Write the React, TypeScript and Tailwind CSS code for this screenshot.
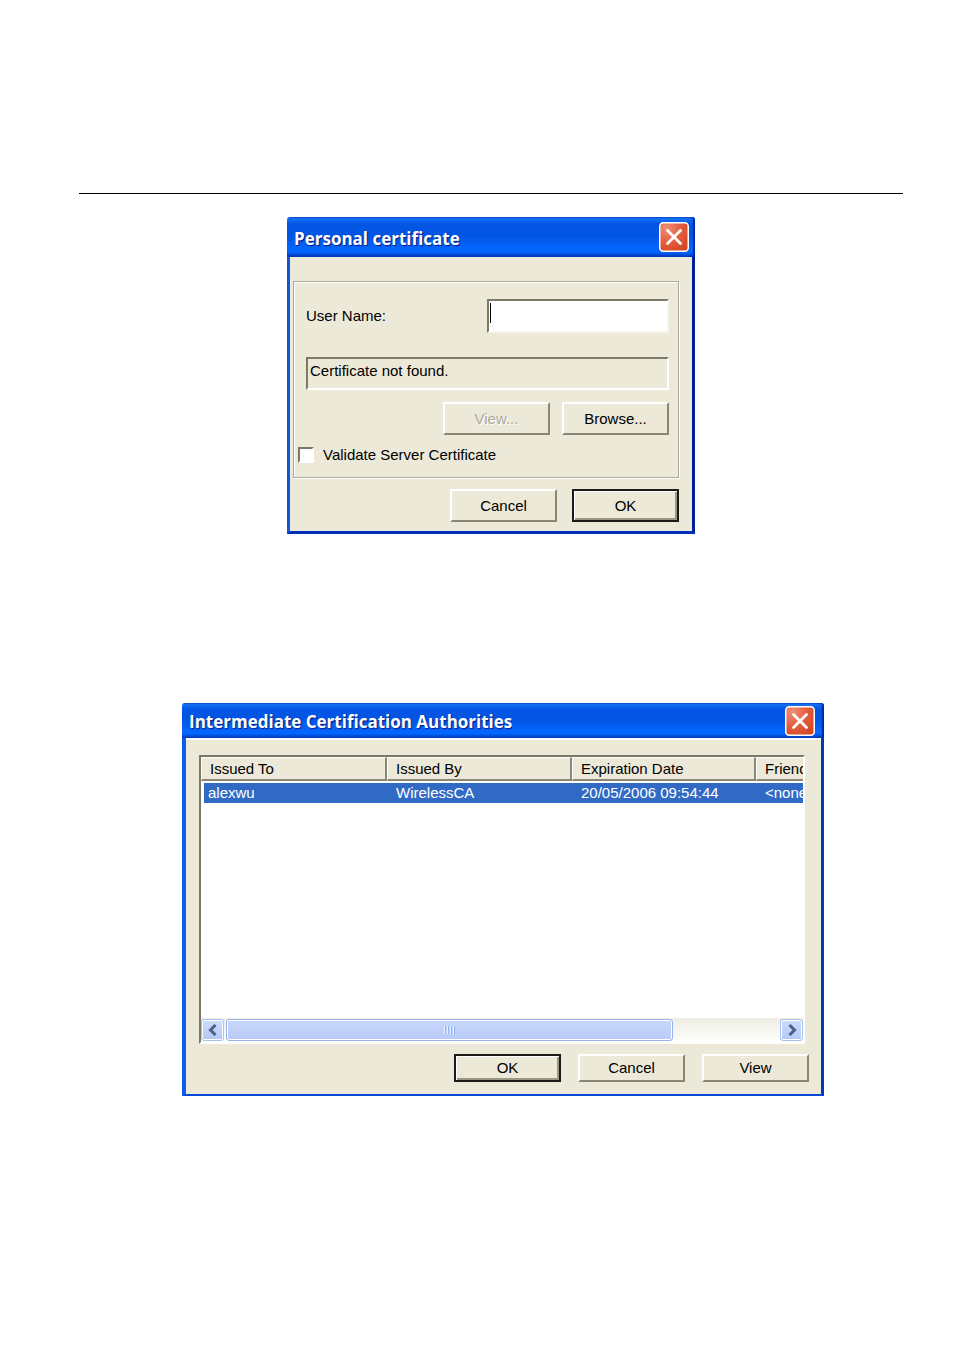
import type { ButtonHTMLAttributes, ReactNode } from "react";
import clsx from "clsx";

const COLUMNS = ["Issued To", "Issued By", "Expiration Date", "Friendly Name"];

const CERTIFICATES = [
  ["alexwu", "WirelessCA", "20/05/2006 09:54:44", "<none>"],
];

function CloseButton() {
  return (
    <button type="button" aria-label="Close" className="h-[30px] w-[30px] shrink-0">
      <svg viewBox="0 0 30 30" className="block h-full w-full">
        <defs>
          <radialGradient id="close-face" cx="0.25" cy="0.2" r="1">
            <stop offset="0" stopColor="#f09078" />
            <stop offset="0.45" stopColor="#e65f42" />
            <stop offset="1" stopColor="#d0441c" />
          </radialGradient>
        </defs>
        <rect x="0.75" y="0.75" width="28.5" height="28.5" rx="3.5" fill="url(#close-face)" stroke="#fff" strokeWidth="1.5" />
        <path d="M8.5 8.5 L21.5 21.5 M21.5 8.5 L8.5 21.5" stroke="#fff" strokeWidth="2.8" strokeLinecap="round" />
      </svg>
    </button>
  );
}

function TitleBar({ title, className }: { title: string; className?: string }) {
  return (
    <header
      className={clsx(
        "flex items-center justify-between rounded-t-[3px] bg-[linear-gradient(180deg,#0b50c8_0%,#1470f4_5%,#0556e4_16%,#0254e2_45%,#0464fa_75%,#0266ff_88%,#0148d0_95%,#0038b8_100%)] pl-[7px] shadow-[inset_-2px_0_1px_#0028a8]",
        className,
      )}
    >
      <h2 className="truncate pt-[3px] font-['Open_Sans',sans-serif] text-[17px] leading-6 font-bold text-white [text-shadow:1px_1px_1px_#0a1883]">
        {title}
      </h2>
      <CloseButton />
    </header>
  );
}

type PushButtonProps = ButtonHTMLAttributes<HTMLButtonElement> & {
  isDefault?: boolean;
  children: ReactNode;
};

function PushButton({ isDefault, className, children, ...rest }: PushButtonProps) {
  return (
    <button
      type="button"
      className={clsx(
        "flex w-[107px] items-center justify-center bg-[#ece9d8] text-black disabled:text-[#aca899] disabled:[text-shadow:1px_1px_0_#fff]",
        isDefault
          ? "border-2 border-[#1a1a18] shadow-[inset_1px_1px_0_#fff,inset_-2px_-2px_0_#9a9784]"
          : "border-2 border-t-white border-r-[#8a8776] border-b-[#8a8776] border-l-white",
        className,
      )}
      {...rest}
    >
      {children}
    </button>
  );
}

function PersonalCertificateDialog() {
  return (
    <section className="mx-auto w-full max-w-[408px] text-[15px] leading-5">
      <TitleBar title="Personal certificate" className="h-10 pr-[6px]" />
      <div className="border-x-3 border-b-3 border-r-[#00209c] border-b-[#0030b8] border-l-[#1258d8] bg-[#ece9d8] pt-6 pr-[13px] pb-[9px] pl-[3px]">
        <div className="border border-[#aca899] pt-[17px] pr-[9px] pb-3 pl-1 shadow-[1px_1px_0_#fff,inset_1px_1px_0_#fff]">
          <div className="flex items-center justify-between pl-2">
            <label htmlFor="user-name">User Name:</label>
            <div className="relative w-[182px]">
              <input
                id="user-name"
                type="text"
                className="block h-[34px] w-full border-2 border-t-[#7c7968] border-r-[#f8f6ec] border-b-[#f8f6ec] border-l-[#7c7968] bg-white px-1 outline-none"
              />
              <span className="absolute top-1 left-[3px] h-5 w-px bg-black" />
            </div>
          </div>
          <div className="mt-6 ml-2">
            <output className="block h-[33px] border-2 border-t-[#7c7968] border-r-white border-b-white border-l-[#7c7968] px-[2px] leading-6">
              Certificate not found.
            </output>
          </div>
          <div className="mt-3 flex justify-end gap-3">
            <PushButton disabled className="h-[33px]">View...</PushButton>
            <PushButton className="h-[33px]">Browse...</PushButton>
          </div>
          <label className="mt-[10px] flex items-center gap-[9px]">
            <input
              type="checkbox"
              className="h-4 w-4 appearance-none border-2 border-t-[#7c7968] border-r-white border-b-white border-l-[#7c7968] bg-white checked:bg-[#316ac5]"
            />
            Validate Server Certificate
          </label>
        </div>
        <div className="mt-[11px] flex justify-end gap-[15px]">
          <PushButton className="h-[33px]">Cancel</PushButton>
          <PushButton isDefault className="h-[33px]">OK</PushButton>
        </div>
      </div>
    </section>
  );
}

function ScrollArrow({ direction }: { direction: "left" | "right" }) {
  return (
    <button
      type="button"
      aria-label={direction === "left" ? "Scroll left" : "Scroll right"}
      className="flex h-[22px] w-[23px] shrink-0 items-center justify-center rounded-[3px] border border-[#a8c0f0] bg-gradient-to-b from-[#cddcfd] to-[#b4c8f6] shadow-[inset_0_0_0_1px_#fff]"
    >
      <svg viewBox="0 0 12 12" className="h-3 w-3">
        <path
          d={direction === "left" ? "M8.5 1 L3.5 6 L8.5 11" : "M3.5 1 L8.5 6 L3.5 11"}
          fill="none"
          stroke="#4d6185"
          strokeWidth="3"
        />
      </svg>
    </button>
  );
}

function HorizontalScrollbar() {
  return (
    <div className="flex h-6 items-center gap-[2px] bg-gradient-to-b from-[#eeede5] to-[#fefefb]">
      <ScrollArrow direction="left" />
      <div className="flex h-full flex-1 items-center">
        <div className="flex h-[22px] w-[81%] items-center justify-center gap-px rounded-[3px] border border-[#98b4ec] bg-gradient-to-b from-[#c8d6fb] to-[#b8cbf8] shadow-[inset_0_0_0_1px_#fff]">
          {[0, 1, 2, 3].map((i) => (
            <span key={i} className="h-2 w-[2px] border-r border-[#8cb0f8] bg-[#eef4fe]" />
          ))}
        </div>
      </div>
      <ScrollArrow direction="right" />
    </div>
  );
}

function CertificateList() {
  return (
    <div className="flex h-[289px] flex-col border-2 border-t-[#7c7968] border-r-white border-b-white border-l-[#7c7968] bg-white">
      <div className="flex-1 overflow-hidden">
        <table className="w-[720px] table-fixed border-separate border-spacing-0 text-left">
          <colgroup>
            <col className="w-[186px]" />
            <col className="w-[185px]" />
            <col className="w-[184px]" />
            <col />
          </colgroup>
          <thead>
            <tr>
              {COLUMNS.map((column) => (
                <th
                  key={column}
                  className="h-6 border-t border-r-2 border-b-2 border-l border-t-white border-r-[#8a8776] border-b-[#8a8776] border-l-white bg-[#ece9d8] px-2 py-0 font-normal whitespace-nowrap"
                >
                  {column}
                </th>
              ))}
            </tr>
          </thead>
          <tbody>
            <tr aria-hidden="true">
              <td colSpan={4} className="h-[2px] p-0" />
            </tr>
            {CERTIFICATES.map((row) => (
              <tr key={row[0]}>
                {row.map((cell, i) => (
                  <td
                    key={COLUMNS[i]}
                    className={clsx(
                      "h-5 bg-[#316ac5] bg-clip-padding py-0 whitespace-nowrap text-white",
                      i === 0 ? "border-l-3 border-white px-1" : "px-[9px]",
                    )}
                  >
                    {cell}
                  </td>
                ))}
              </tr>
            ))}
          </tbody>
        </table>
      </div>
      <HorizontalScrollbar />
    </div>
  );
}

function AuthoritiesDialog() {
  return (
    <section className="mx-auto w-full max-w-[642px] text-[15px] leading-5">
      <TitleBar title="Intermediate Certification Authorities" className="h-[35px] pr-[9px]" />
      <div className="border-r-3 border-b-2 border-l-4 border-r-[#0038c0] border-b-[#0848d8] border-l-[#0f5ce8] bg-[#ece9d8] pt-[17px] pr-3 pb-3 pl-[13px] shadow-[inset_0_2px_0_#fff]">
        <div className="mr-1">
          <CertificateList />
        </div>
        <div className="mt-[10px] flex justify-end gap-[17px]">
          <PushButton isDefault className="h-7">OK</PushButton>
          <PushButton className="h-7">Cancel</PushButton>
          <PushButton className="h-7">View</PushButton>
        </div>
      </div>
    </section>
  );
}

export default function App() {
  return (
    <main className="min-h-screen bg-white pt-[193px] pr-[51px] pl-[79px] font-['Liberation_Sans',Arial,sans-serif] text-black">
      <hr className="border-t border-black" />
      <div className="mt-[23px]">
        <PersonalCertificateDialog />
      </div>
      <div className="mt-[169px] pl-6">
        <AuthoritiesDialog />
      </div>
    </main>
  );
}
